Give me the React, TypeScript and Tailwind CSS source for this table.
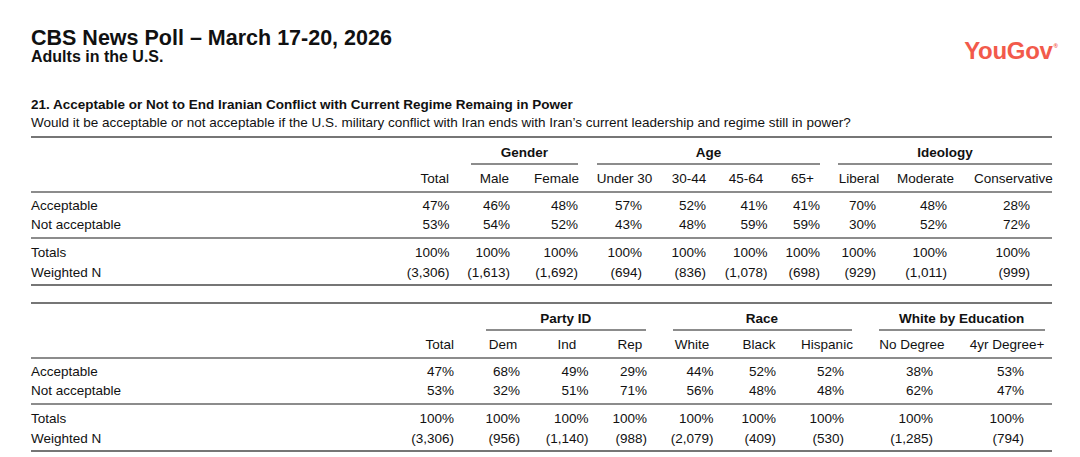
import React from "react";

type Col = { label: string; w: string; h: string; n: string };
type Group = { label: string; w: string; line: string };
type Row = { label: string; values: string[] };
type TableDef = {
  labelW: string;
  spacerW: string;
  groups: Group[];
  cols: Col[];
  pct: Row[];
  totals: Row[];
};

const T1: TableDef = {
  labelW: "w-[369px]",
  spacerW: "w-[427px]",
  groups: [
    { label: "Gender", w: "w-[132px]", line: "ml-[13px] mr-[12px]" },
    { label: "Age", w: "w-[242px]", line: "ml-[7px] mr-[12px]" },
    { label: "Ideology", w: "w-[220px]", line: "ml-[6px] mr-0" },
  ],
  cols: [
    { label: "Total", w: "w-[58px]", h: "text-right pr-[9px]", n: "pr-[8.5px]" },
    { label: "Male", w: "w-[62px]", h: "text-right pr-[11px]", n: "pr-[10px]" },
    { label: "Female", w: "w-[70px]", h: "text-center pl-[3px]", n: "pr-[12px]" },
    { label: "Under 30", w: "w-[69px]", h: "text-center", n: "pr-[17px]" },
    { label: "30-44", w: "w-[60px]", h: "text-center", n: "pr-[13px]" },
    { label: "45-64", w: "w-[54px]", h: "text-center", n: "pr-[5.5px]" },
    { label: "65+", w: "w-[59px]", h: "text-center", n: "pr-[12px]" },
    { label: "Liberal", w: "w-[54px]", h: "text-center", n: "pr-[10px]" },
    { label: "Moderate", w: "w-[79px]", h: "text-center", n: "pr-[18px]" },
    { label: "Conservative", w: "w-[87px]", h: "text-center pl-[9px]", n: "pr-[22px]" },
  ],
  pct: [
    { label: "Acceptable", values: ["47%", "46%", "48%", "57%", "52%", "41%", "41%", "70%", "48%", "28%"] },
    { label: "Not acceptable", values: ["53%", "54%", "52%", "43%", "48%", "59%", "59%", "30%", "52%", "72%"] },
  ],
  totals: [
    { label: "Totals", values: ["100%", "100%", "100%", "100%", "100%", "100%", "100%", "100%", "100%", "100%"] },
    {
      label: "Weighted N",
      values: ["(3,306)", "(1,613)", "(1,692)", "(694)", "(836)", "(1,078)", "(698)", "(929)", "(1,011)", "(999)"],
    },
  ],
};

const T2: TableDef = {
  labelW: "w-[374px]",
  spacerW: "w-[442px]",
  groups: [
    { label: "Party ID", w: "w-[186px]", line: "ml-[12.5px] mr-[13px]" },
    { label: "Race", w: "w-[202px]", line: "ml-[13.5px] mr-[9.5px]" },
    { label: "White by Education", w: "w-[190px]", line: "ml-[18px] mr-[6.5px]" },
  ],
  cols: [
    { label: "Total", w: "w-[68px]", h: "text-right pr-[19px]", n: "pr-[19px]" },
    { label: "Dem", w: "w-[60px]", h: "text-center", n: "pr-[13px]" },
    { label: "Ind", w: "w-[68px]", h: "text-center", n: "pr-[12.5px]" },
    { label: "Rep", w: "w-[58px]", h: "text-center", n: "pr-[12px]" },
    { label: "White", w: "w-[66px]", h: "text-center", n: "pr-[11.5px]" },
    { label: "Black", w: "w-[68px]", h: "text-center", n: "pr-[17px]" },
    { label: "Hispanic", w: "w-[68px]", h: "text-center", n: "pr-[17px]" },
    { label: "No Degree", w: "w-[102px]", h: "text-center", n: "pr-[30px]" },
    { label: "4yr Degree+", w: "w-[88px]", h: "text-center", n: "pr-[27px]" },
  ],
  pct: [
    { label: "Acceptable", values: ["47%", "68%", "49%", "29%", "44%", "52%", "52%", "38%", "53%"] },
    { label: "Not acceptable", values: ["53%", "32%", "51%", "71%", "56%", "48%", "48%", "62%", "47%"] },
  ],
  totals: [
    { label: "Totals", values: ["100%", "100%", "100%", "100%", "100%", "100%", "100%", "100%", "100%"] },
    {
      label: "Weighted N",
      values: ["(3,306)", "(956)", "(1,140)", "(988)", "(2,079)", "(409)", "(530)", "(1,285)", "(794)"],
    },
  ],
};

function DataRow({ t, row }: { t: TableDef; row: Row }) {
  return (
    <div className="flex leading-[19.5px] whitespace-nowrap">
      <div className={`${t.labelW} shrink-0`}>{row.label}</div>
      {t.cols.map((c, i) => (
        <div key={c.label} className={`${c.w} shrink-0 text-right ${c.n}`}>
          {row.values[i]}
        </div>
      ))}
    </div>
  );
}

function PollTable({ t, className }: { t: TableDef; className?: string }) {
  return (
    <div className={className}>
      <div className="h-[2px] bg-[#767676]" />
      <div className="flex pt-[5px] whitespace-nowrap">
        <div className={`${t.spacerW} shrink-0`} />
        {t.groups.map((g) => (
          <div key={g.label} className={`${g.w} shrink-0`}>
            <div className={g.line}>
              <div className="text-center font-bold leading-[19.5px]">{g.label}</div>
              <div className="h-[2px] bg-[#8c8c8c]" />
            </div>
          </div>
        ))}
      </div>
      <div className="flex pt-[4.5px] pb-[2.5px] leading-[19.5px] whitespace-nowrap">
        <div className={`${t.labelW} shrink-0`} />
        {t.cols.map((c) => (
          <div key={c.label} className={`${c.w} shrink-0 ${c.h}`}>
            {c.label}
          </div>
        ))}
      </div>
      <div className="h-[2px] bg-[#8c8c8c]" />
      <div className="pt-[2.5px] pb-[2.5px]">
        {t.pct.map((r) => (
          <DataRow key={r.label} t={t} row={r} />
        ))}
      </div>
      <div className="h-[2px] bg-[#8c8c8c]" />
      <div className="pt-[4px] pb-[2px]">
        {t.totals.map((r) => (
          <DataRow key={r.label} t={t} row={r} />
        ))}
      </div>
      <div className="h-[2px] bg-[#767676]" />
    </div>
  );
}

export default function App() {
  return (
    <div className="w-[1080px] h-[457px] overflow-hidden bg-white text-[#111] font-['Liberation_Sans',Arial,Helvetica,sans-serif] pl-[31px] pr-[28px] pt-[27px]">
      <div className="flex justify-between items-start">
        <div className="font-bold whitespace-nowrap">
          <h1 className="text-[21.5px] leading-[22px]">CBS News Poll – March 17-20, 2026</h1>
          <p className="text-[16px] leading-[16px]">Adults in the U.S.</p>
        </div>
        <div className="mt-[12px] -mr-[6px] flex items-start text-[#f25a4b] font-bold">
          <span className="text-[24px] leading-[24px] tracking-[-0.3px]">YouGov</span>
          <span className="text-[6px] leading-[6px] mt-[4px] ml-[1px]">®</span>
        </div>
      </div>

      <div className="mt-[30.5px] text-[13.5px] leading-[18px] whitespace-nowrap">
        <div className="font-bold">
          21. Acceptable or Not to End Iranian Conflict with Current Regime Remaing in Power
        </div>
        <div>
          Would it be acceptable or not acceptable if the U.S. military conflict with Iran ends with Iran’s current
          leadership and regime still in power?
        </div>
      </div>

      <div className="text-[13.5px]">
        <PollTable t={T1} className="mt-[4.5px]" />
        <PollTable t={T2} className="mt-[16px]" />
      </div>
    </div>
  );
}
